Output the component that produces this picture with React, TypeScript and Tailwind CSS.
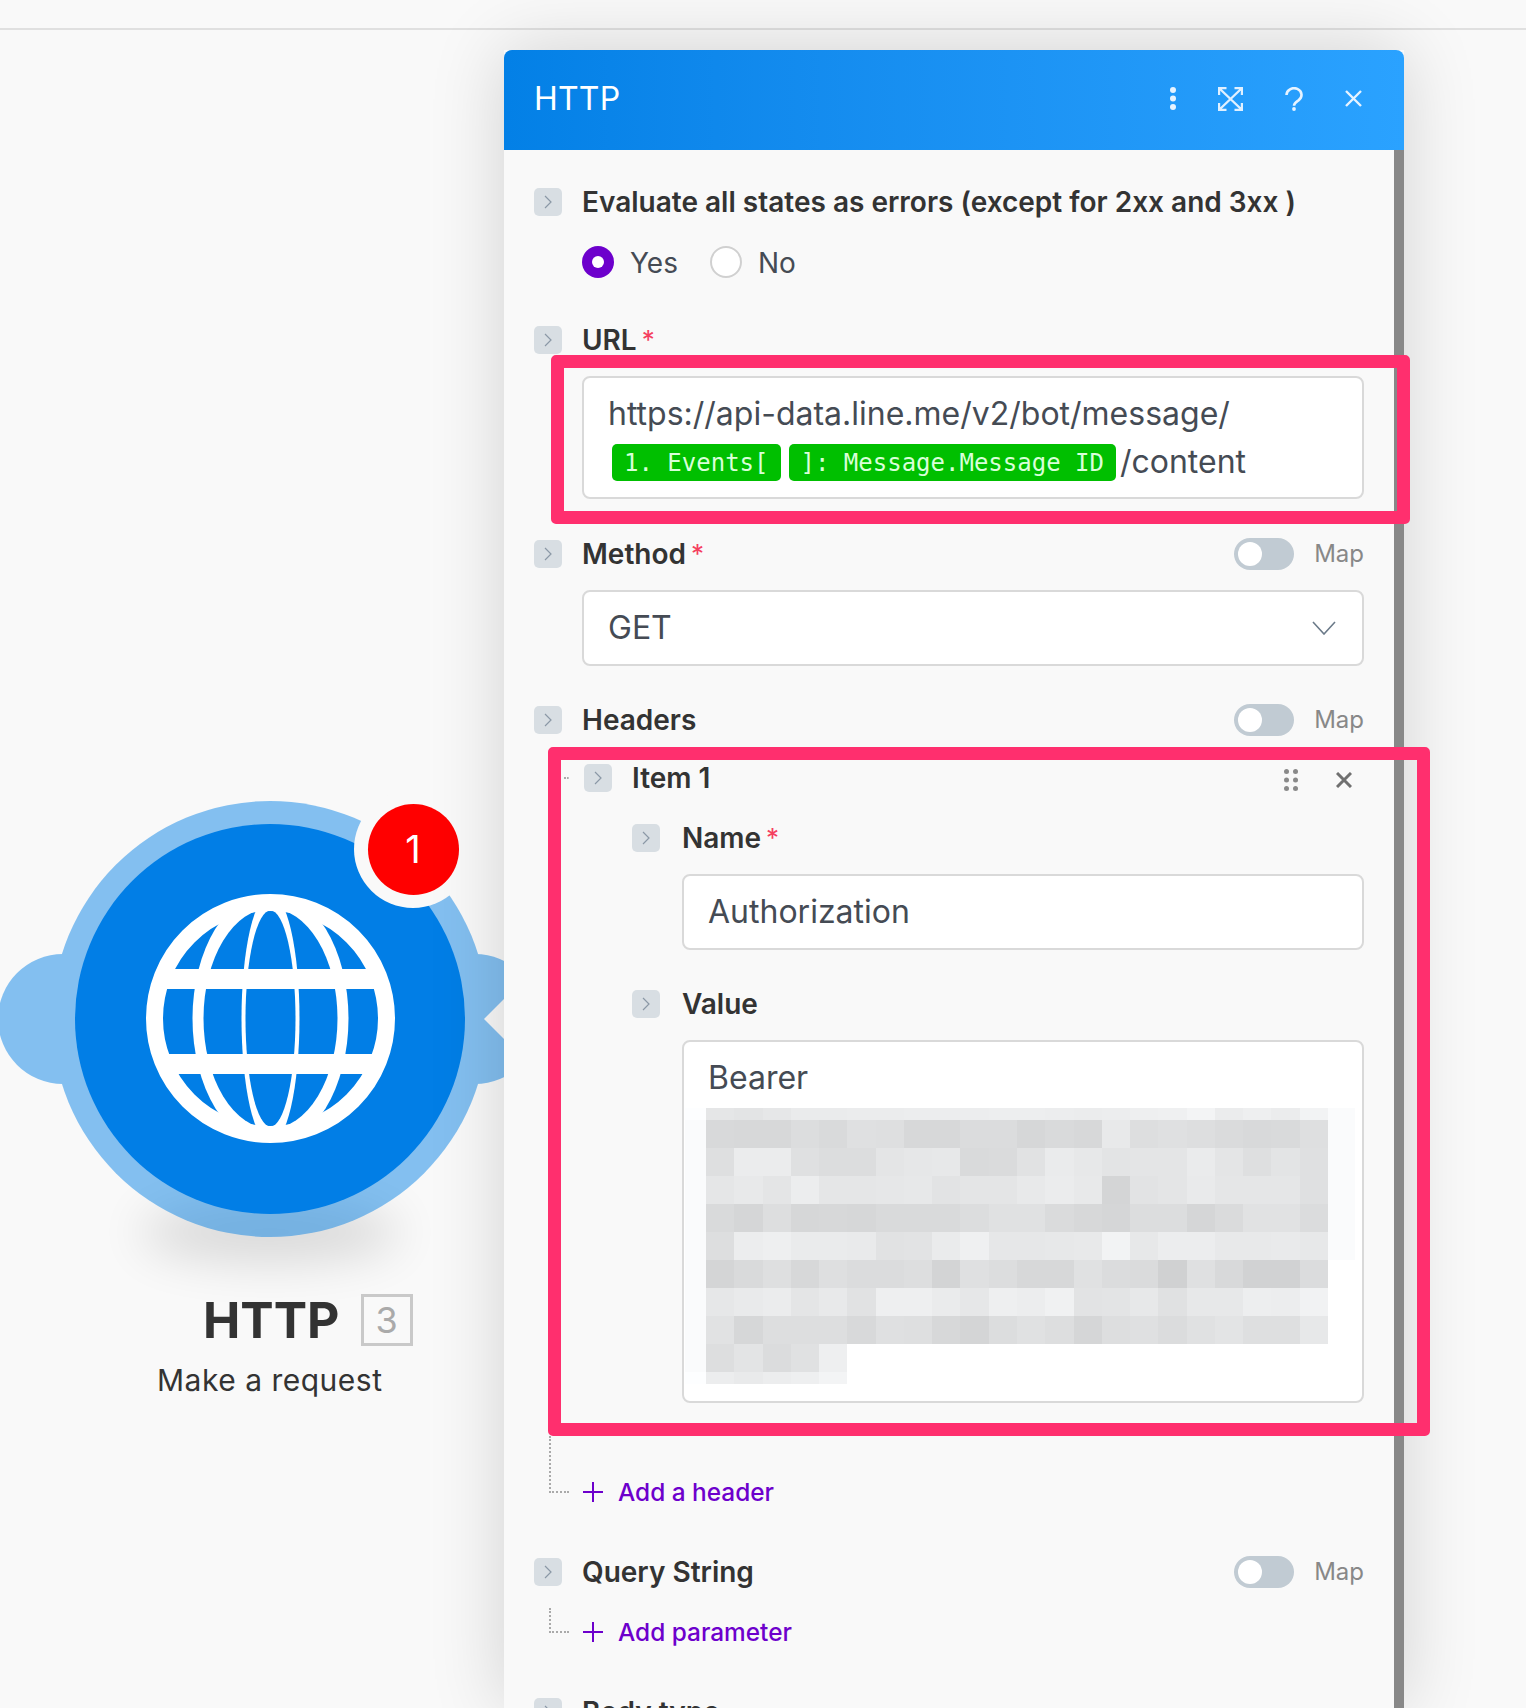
import React from "react";

const MOSAIC: number[][] = [
  [0xe5,0xe3,0xe6,0xea,0xea,0xeb,0xeb,0xec,0xec,0xec,0xed,0xed,0xec,0xeb,0xec,0xee,0xef,0xf3,0xeb,0xee,0xeb,0xf2],
  [0xd8,0xd7,0xd7,0xdc,0xd9,0xdf,0xde,0xd7,0xd7,0xdb,0xdb,0xd6,0xd9,0xd7,0xe8,0xdd,0xdf,0xdd,0xda,0xd8,0xd9,0xde],
  [0xde,0xeb,0xeb,0xdf,0xdc,0xdc,0xe4,0xe6,0xe7,0xd9,0xda,0xe1,0xea,0xe7,0xe3,0xe4,0xe4,0xea,0xe4,0xde,0xe3,0xdf],
  [0xe5,0xe8,0xe4,0xec,0xe5,0xe5,0xe6,0xe7,0xe2,0xe4,0xe4,0xe8,0xeb,0xe8,0xd4,0xe2,0xe4,0xe9,0xe5,0xe5,0xe5,0xdf],
  [0xd9,0xd5,0xdd,0xd6,0xd7,0xd6,0xd9,0xd9,0xd9,0xdc,0xe0,0xe0,0xda,0xd7,0xd5,0xdc,0xdc,0xd5,0xda,0xe1,0xe1,0xdb],
  [0xdd,0xec,0xee,0xea,0xea,0xe9,0xe1,0xe2,0xea,0xef,0xe6,0xe6,0xe7,0xe8,0xf2,0xe7,0xec,0xec,0xe8,0xe8,0xe9,0xe7],
  [0xd4,0xd9,0xde,0xd7,0xde,0xdb,0xdb,0xdd,0xd3,0xdf,0xdc,0xd7,0xd7,0xe0,0xdb,0xda,0xd0,0xdf,0xd8,0xd1,0xd1,0xdb],
  [0xe6,0xe9,0xeb,0xe4,0xe8,0xe1,0xee,0xee,0xea,0xe6,0xee,0xec,0xf0,0xe2,0xe3,0xe7,0xe0,0xe7,0xe7,0xed,0xec,0xf1],
  [0xe1,0xd6,0xdd,0xdd,0xdd,0xd8,0xdf,0xde,0xd7,0xd4,0xdc,0xe0,0xdd,0xd5,0xdd,0xdf,0xdb,0xe0,0xe3,0xde,0xde,0xe7],
  [0xdd,0xe3,0xdb,0xe0,0xee],
  [0xec,0xe9,0xec,0xee,0xf3],
];

const gray = (v: number) => `rgb(${v},${Math.min(255, v + 1)},${Math.min(255, v + 2)})`;

function Mosaic() {
  const cells: React.ReactNode[] = [];
  MOSAIC.forEach((row, r) => {
    cells.push(<div key={`l${r}`} style={{ background: gray(r === 0 || r === 10 ? 0xfd : 0xfa) }} />);
    for (let c = 0; c < 22; c++) {
      cells.push(<div key={`${r}-${c}`} style={{ background: c < row.length ? gray(row[c]) : "#ffffff" }} />);
    }
    cells.push(<div key={`r${r}`} style={{ background: r < 6 ? gray(0xfa) : "#ffffff" }} />);
  });
  return (
    <div className="grid h-[276px] w-[670px] grid-cols-[21px_repeat(22,minmax(0,1fr))_27px] grid-rows-[12px_repeat(9,28px)_12px]">
      {cells}
    </div>
  );
}

function Chevron() {
  return (
    <div className="flex h-[28px] w-[28px] shrink-0 items-center justify-center rounded-[5px] bg-[#d8dee3]">
      <svg width="8" height="14" viewBox="0 0 8 14" fill="none">
        <path d="M1 1l6 6-6 6" stroke="#8b98a6" strokeWidth="1.2" />
      </svg>
    </div>
  );
}

function Toggle() {
  return (
    <div className="flex items-center gap-[20px]">
      <div className="flex h-[32px] w-[60px] items-center rounded-full bg-[#c1cbd3] pl-[4px]">
        <div className="h-[24px] w-[24px] rounded-full bg-white" />
      </div>
      <span className="text-[24px] leading-[32px] text-[#888888]">Map</span>
    </div>
  );
}

function Label({ children, req, map, nested, className = "" }: { children: React.ReactNode; req?: boolean; map?: boolean; nested?: boolean; className?: string }) {
  return (
    <div className={`flex h-[32px] items-center ${className}`}>
      <Chevron />
      <span className={`${nested ? "ml-[22px]" : "ml-[20px]"} whitespace-nowrap text-[28px] font-semibold leading-[32px] text-[#333333]`}>{children}</span>
      {req && <span className="ml-[5px] mt-[3px] self-start text-[26px] leading-[26px] text-[#f5405f]">*</span>}
      {map && (
        <div className="ml-auto">
          <Toggle />
        </div>
      )}
    </div>
  );
}

function AddLink({ children, className = "" }: { children: React.ReactNode; className?: string }) {
  return (
    <div className={`flex h-[32px] items-center pl-[49px] ${className}`}>
      <svg width="20" height="20" viewBox="0 0 20 20" fill="none">
        <path d="M10 0v20M0 10h20" stroke="#6d00cc" strokeWidth="2" />
      </svg>
      <span className="ml-[15px] text-[24.4px] font-medium leading-[32px] text-[#6d00cc]">{children}</span>
    </div>
  );
}

function Globe() {
  const cx = 270.5;
  const cy = 1018.5;
  return (
    <svg className="absolute left-0 top-[760px] h-[600px] w-[560px]" viewBox="0 760 560 600" fill="none">
      <defs>
        <filter id="nodeShadow" x="-30%" y="-100%" width="160%" height="300%">
          <feGaussianBlur stdDeviation="24" />
        </filter>
        <clipPath id="globeClip">
          <circle cx={cx} cy={cy} r="120" />
        </clipPath>
      </defs>
      <ellipse cx="270" cy="1232" rx="130" ry="30" fill="#000" opacity="0.13" filter="url(#nodeShadow)" />
      <g opacity="0.47" fill="#0180e6">
        <circle cx="270" cy="1019" r="218" />
        <circle cx="63" cy="1019" r="65" />
        <circle cx="475" cy="1019" r="65" />
      </g>
      <path d="M484 1019l36-36v72z" fill="#f9f9f9" />
      <circle cx="270" cy="1019" r="195" fill="#017ee6" />
      <g clipPath="url(#globeClip)">
        <ellipse cx={cx} cy={cy} rx="78" ry="127" fill="#fff" />
        <ellipse cx={cx} cy={cy} rx="67" ry="110" fill="#017ee6" />
        <ellipse cx={cx} cy={cy} rx="29" ry="125" fill="#fff" />
        <ellipse cx={cx} cy={cy} rx="25" ry="108" fill="#017ee6" />
        <rect x="140" y="969" width="262" height="20" fill="#fff" />
        <rect x="140" y="1054" width="262" height="20" fill="#fff" />
      </g>
      <circle cx={cx} cy={cy} r="116" stroke="#fff" strokeWidth="17" />
    </svg>
  );
}

function Node() {
  return (
    <>
      <Globe />
      <div className="absolute left-[354px] top-[790px] flex h-[118px] w-[118px] items-center justify-center rounded-full bg-[#f9f9f9]">
        <div className="flex h-[91px] w-[91px] items-center justify-center rounded-full bg-[#ff0000] text-[38px] leading-none text-white">1</div>
      </div>
      <div className="absolute left-[203px] top-[1294px] flex items-center">
        <span className="text-[50px] font-bold leading-[52px] text-[#333333]">HTTP</span>
        <span className="ml-[21px] flex h-[52px] w-[52px] items-center justify-center border-[3px] border-[#c9c9c9] text-[36px] leading-none text-[#aaaaaa]">3</span>
      </div>
      <div className="absolute left-[157px] top-[1361px] whitespace-nowrap text-[30px] leading-[38px] tracking-[0.5px] text-[#333333]">Make a request</div>
    </>
  );
}

function Radio({ on, label }: { on?: boolean; label: string }) {
  return (
    <div className="flex h-[32px] items-center gap-[16px]">
      {on ? (
        <div className="flex h-[32px] w-[32px] items-center justify-center rounded-full bg-[#6d00cc]">
          <div className="h-[12px] w-[12px] rounded-full bg-white" />
        </div>
      ) : (
        <div className="h-[32px] w-[32px] rounded-full border-2 border-[#d0d0d0] bg-white" />
      )}
      <span className="mt-[2px] text-[28px] leading-[32px] text-[#454b54]">{label}</span>
    </div>
  );
}

function Token({ children }: { children: React.ReactNode }) {
  return (
    <span className="flex h-[37px] items-center whitespace-pre rounded-[5px] bg-[#00bf00] px-[12px] pt-[1px] font-['DejaVu_Sans_Mono',monospace] text-[24px] leading-none text-[#d9ffd9]">
      {children}
    </span>
  );
}

export default function App() {
  return (
    <div className="relative h-[1708px] w-[1526px] overflow-hidden bg-[#f9f9f9] font-['Inter',sans-serif]">
      <div className="h-[30px] border-b-2 border-[#e0e0e0]" />
      <Node />
      <div className="relative ml-[504px] mt-[20px] w-[900px] shadow-[0_0_70px_rgba(0,0,0,0.16)]">
        <header className="flex h-[100px] items-center rounded-t-[8px] bg-linear-to-r from-[#0380e6] to-[#2aa2ff] pl-[30px] text-white">
          <h1 className="relative top-[-1px] text-[32px] font-normal leading-none tracking-[0.2px]">HTTP</h1>
          <div className="mb-[3px] ml-auto flex items-center gap-[42px] pr-[42px]">
            <svg width="6" height="23" viewBox="0 0 6 23" fill="#e6f3ff">
              <circle cx="3" cy="3" r="3" />
              <circle cx="3" cy="11.5" r="3" />
              <circle cx="3" cy="20" r="3" />
            </svg>
            <svg width="25" height="24" viewBox="0 0 25 24" fill="none" stroke="#e0f0ff" strokeWidth="2.4">
              <path d="M1 8V1h7.5M16.5 1H24v7M24 16v7h-7.5M8.5 23H1v-7M2 2l21 20M23 2L2 22" />
            </svg>
            <svg width="18" height="24" viewBox="0 0 18 24" fill="none" stroke="#e6f3ff" strokeWidth="2.6">
              <path d="M1.5 8a7.5 6.7 0 1 1 12 5.3c-2.6 1.7-4.5 2.6-4.5 5.4" />
              <circle cx="9" cy="22" r="1.9" fill="#e6f3ff" stroke="none" />
            </svg>
            <svg width="17" height="17" viewBox="0 0 17 17" fill="none" stroke="#e6f3ff" strokeWidth="2.4">
              <path d="M1 1l15 15M16 1L1 16" />
            </svg>
          </div>
        </header>

        <div className="flex h-[1558px] bg-[#f9f9f9]">
          <form className="flex-1 pl-[30px] pr-[30px] pt-[36px]">
            <Label>Evaluate all states as errors (except for 2xx and 3xx )</Label>
            <div className="ml-[48px] mt-[28px] flex gap-[32px]">
              <Radio on label="Yes" />
              <Radio label="No" />
            </div>

            <Label req className="mt-[46px]">URL</Label>
            <div className="ml-[48px] mt-[20px] h-[123px] rounded-[8px] border-2 border-[#d9d9d9] bg-white pl-[24px] pt-[16px] text-[32px] leading-[40px] text-[#454b54]">
              <div>https://api-data.line.me/v2/bot/message/</div>
              <div className="mt-[8px] flex items-center pl-[4px]">
                <Token>1. Events[</Token>
                <span className="w-[8px]" />
                <Token>]: Message.Message ID</Token>
                <span className="ml-[4px]">/content</span>
              </div>
            </div>

            <Label req map className="mt-[39px]">Method</Label>
            <div className="ml-[48px] mt-[20px] flex h-[76px] items-center justify-between rounded-[8px] border-2 border-[#d9d9d9] bg-white pl-[24px] pr-[26px] text-[32px] text-[#454b54]">
              <span>GET</span>
              <svg width="24" height="14" viewBox="0 0 24 14" fill="none">
                <path d="M1 1l11 12L23 1" stroke="#6b7a89" strokeWidth="1.6" />
              </svg>
            </div>

            <Label map className="mt-[38px]">Headers</Label>

            <div className="relative ml-[50px] mt-[26px] flex h-[32px] items-center">
              <span className="absolute left-[-20px] top-[15px] w-[5px] border-t-2 border-dotted border-[#aaaaaa]" />
              <Chevron />
              <span className="ml-[20px] text-[28px] font-semibold leading-[32px] text-[#333333]">Item 1</span>
              <svg className="ml-auto mt-[4px]" width="14" height="22" viewBox="0 0 14 22" fill="#8a8a8a">
                <circle cx="2.5" cy="2.5" r="2.5" /><circle cx="11.5" cy="2.5" r="2.5" />
                <circle cx="2.5" cy="11" r="2.5" /><circle cx="11.5" cy="11" r="2.5" />
                <circle cx="2.5" cy="19.5" r="2.5" /><circle cx="11.5" cy="19.5" r="2.5" />
              </svg>
              <svg className="ml-[38px] mr-[12px] mt-[4px]" width="16" height="16" viewBox="0 0 16 16" fill="none" stroke="#707070" strokeWidth="3">
                <path d="M1 1l14 14M15 1L1 15" />
              </svg>
            </div>

            <div className="ml-[98px]">
              <Label req nested className="mt-[28px]">Name</Label>
              <div className="ml-[50px] mt-[20px] flex h-[76px] items-center rounded-[8px] border-2 border-[#d9d9d9] bg-white pl-[24px] text-[32px] text-[#454b54]">Authorization</div>

              <Label nested className="mt-[38px]">Value</Label>
              <div className="ml-[50px] mt-[20px] h-[363px] rounded-[8px] border-2 border-[#d9d9d9] bg-white pt-[12px] text-[32px] leading-[48px] text-[#454b54]">
                <div className="pl-[24px]">Bearer</div>
                <div className="ml-[1px] mt-[6px]">
                  <Mosaic />
                </div>
              </div>
            </div>

            <div className="relative mt-[73px]">
              <span className="absolute left-[15px] top-[-40px] h-[57px] w-[20px] border-b-2 border-l-2 border-dotted border-[#aaaaaa]" />
              <AddLink>Add a header</AddLink>
            </div>

            <Label map className="mt-[48px]">Query String</Label>

            <div className="relative mt-[28px]">
              <span className="absolute left-[15px] top-[-8px] h-[25px] w-[20px] border-b-2 border-l-2 border-dotted border-[#aaaaaa]" />
              <AddLink>Add parameter</AddLink>
            </div>

            <Label className="mt-[48px]">Body type</Label>
          </form>
          <div className="w-[10px] shrink-0 bg-[#888888]" />
        </div>

        <div className="pointer-events-none absolute left-[47px] top-[305px] h-[169px] w-[859px] rounded-[5px] border-[13px] border-[#ff2f6e]" />
        <div className="pointer-events-none absolute left-[44px] top-[697px] h-[689px] w-[882px] rounded-[5px] border-[13px] border-[#ff2f6e]" />
      </div>
    </div>
  );
}
